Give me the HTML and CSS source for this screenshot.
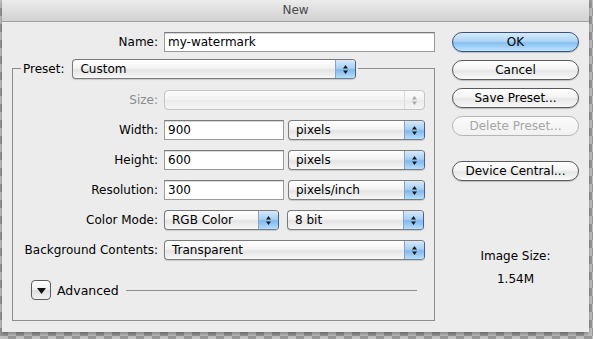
FILE: index.html
```html
<!DOCTYPE html>
<html>
<head>
<title>New</title>
<link rel="stylesheet" href="styles.css">
</head>
<body>

<div class="dialog">
  <div class="titlebar">New</div>

  <div class="sheet">
    <div class="form">

      <div class="namerow">
        <span class="lbl">Name:</span>
        <div class="field">my-watermark</div>
      </div>

      <div class="group">
        <div class="legend">
          <span>Preset:</span>
          <div class="popup preset"><span class="val">Custom</span><span class="arrows"><svg width="5" height="9" viewBox="0 0 5 9"><path d="M2.5 0L5 3.5H0Z M0 5.5H5L2.5 9Z"/></svg></span></div>
        </div>

        <div class="rows">
          <span class="lbl off">Size:</span>
          <div class="popup disabled"><span class="val"></span><span class="arrows"><svg width="5" height="9" viewBox="0 0 5 9"><path d="M2.5 0L5 3.5H0Z M0 5.5H5L2.5 9Z"/></svg></span></div>

          <span class="lbl">Width:</span>
          <div class="pair">
            <div class="field num">900</div>
            <div class="popup unit"><span class="val">pixels</span><span class="arrows"><svg width="5" height="9" viewBox="0 0 5 9"><path d="M2.5 0L5 3.5H0Z M0 5.5H5L2.5 9Z"/></svg></span></div>
          </div>

          <span class="lbl">Height:</span>
          <div class="pair">
            <div class="field num">600</div>
            <div class="popup unit"><span class="val">pixels</span><span class="arrows"><svg width="5" height="9" viewBox="0 0 5 9"><path d="M2.5 0L5 3.5H0Z M0 5.5H5L2.5 9Z"/></svg></span></div>
          </div>

          <span class="lbl">Resolution:</span>
          <div class="pair">
            <div class="field num">300</div>
            <div class="popup unit"><span class="val">pixels/inch</span><span class="arrows"><svg width="5" height="9" viewBox="0 0 5 9"><path d="M2.5 0L5 3.5H0Z M0 5.5H5L2.5 9Z"/></svg></span></div>
          </div>

          <span class="lbl">Color Mode:</span>
          <div class="pair">
            <div class="popup mode"><span class="val">RGB Color</span><span class="arrows"><svg width="5" height="9" viewBox="0 0 5 9"><path d="M2.5 0L5 3.5H0Z M0 5.5H5L2.5 9Z"/></svg></span></div>
            <div class="popup unit"><span class="val">8 bit</span><span class="arrows"><svg width="5" height="9" viewBox="0 0 5 9"><path d="M2.5 0L5 3.5H0Z M0 5.5H5L2.5 9Z"/></svg></span></div>
          </div>

          <span class="lbl">Background Contents:</span>
          <div class="popup"><span class="val">Transparent</span><span class="arrows"><svg width="5" height="9" viewBox="0 0 5 9"><path d="M2.5 0L5 3.5H0Z M0 5.5H5L2.5 9Z"/></svg></span></div>
        </div>

        <div class="advanced">
          <span class="disclose"><svg width="9" height="6" viewBox="0 0 9 6"><path d="M0 0H9L4.5 6Z"/></svg></span>
          <span>Advanced</span>
          <span class="rule"></span>
        </div>
      </div>

    </div>

    <div class="side">
      <div class="btn default">OK</div>
      <div class="btn">Cancel</div>
      <div class="btn">Save Preset...</div>
      <div class="btn disabled">Delete Preset...</div>
      <div class="btn central">Device Central...</div>

      <div class="imgsize">
        <div>Image Size:</div>
        <div class="amount">1.54M</div>
      </div>
    </div>
  </div>
</div>

</body>
</html>
```

FILE: styles.css
```css
body {
    margin: 0;
    height: 339px;
    overflow: hidden;
    font-family: "DejaVu Sans", sans-serif;
    font-size: 12px;
    color: #000;
    background: conic-gradient(#9a9a9a 25%, #c2c2c2 0 50%, #9a9a9a 0 75%, #c2c2c2 0) 0 0 / 16px 16px;
}

.dialog {
    margin-left: 2px;
    width: 587px;
    height: 332px;
    background: #ececec;
    box-shadow: 0 2px 4px rgba(0, 0, 0, 0.35);
}

.titlebar {
    height: 21px;
    line-height: 21px;
    text-align: center;
    font-size: 12px;
    color: #4a4a4a;
    border-bottom: 1px solid #a2a2a2;
    background: linear-gradient(#ebebeb, #d2d2d2);
}

.sheet {
    display: flex;
    padding: 10px 0 0 10px;
}

.form {
    width: 423px;
}

.lbl {
    text-align: right;
    line-height: 20px;
    white-space: nowrap;
}

.lbl.off {
    color: #8c8c8c;
}

.namerow {
    display: grid;
    grid-template-columns: 146px 271px;
    column-gap: 6px;
}

.field {
    box-sizing: border-box;
    height: 20px;
    line-height: 18px;
    padding-left: 3px;
    background: #fff;
    border: 1px solid #9a9a9a;
    border-top-color: #7c7c7c;
    box-shadow: inset 0 1px 0 #d8d8d8;
}

.field.num {
    width: 120px;
}

/* group box */

.group {
    box-sizing: border-box;
    width: 423px;
    margin-top: 16px;
    padding-bottom: 20px;
    border: 1px solid #8e8e8e;
}

.legend {
    display: flex;
    align-items: center;
    gap: 8px;
    width: fit-content;
    height: 20px;
    margin: -10px 0 0 8px;
    padding: 0 2px;
    background: #ececec;
}

.rows {
    display: grid;
    grid-template-columns: 145px 261px;
    column-gap: 6px;
    row-gap: 10px;
    margin-top: 11px;
}

.pair {
    display: flex;
    gap: 4px;
}

/* popup menus */

.popup {
    box-sizing: border-box;
    display: flex;
    align-items: center;
    height: 20px;
    padding-left: 7px;
    border: 1px solid #7b7b7b;
    border-right-color: #4c5f82;
    border-radius: 4px;
    background: linear-gradient(#ffffff, #f3f3f3 45%, #e4e4e4 55%, #f7f7f7);
    box-shadow: 0 1px 1px rgba(0, 0, 0, 0.15);
    overflow: hidden;
}

.popup .val {
    flex: 1;
    white-space: nowrap;
}

.popup .arrows {
    display: flex;
    align-items: center;
    justify-content: center;
    width: 19px;
    align-self: stretch;
    border-left: 1px solid #8aa2c4;
    background: linear-gradient(#d6e9fb, #a8d0f5 45%, #7fb8ee 55%, #b9def9);
}

.popup .arrows svg {
    fill: #1a1a1a;
}

.preset {
    width: 284px;
}

.unit {
    width: 137px;
}

.mode {
    width: 115px;
    margin-right: 4px;
}

.popup.disabled {
    border-color: #c4c4c4;
    background: linear-gradient(#fbfbfb, #f2f2f2 50%, #ebebeb 51%, #f4f4f4);
    box-shadow: none;
}

.popup.disabled .arrows {
    border-left-color: #dcdcdc;
    background: none;
}

.popup.disabled .arrows svg {
    fill: #a9a9a9;
}

/* advanced */

.advanced {
    display: flex;
    align-items: center;
    gap: 6px;
    margin: 20px 17px 0 18px;
    font-size: 12.5px;
}

.disclose {
    box-sizing: border-box;
    display: flex;
    align-items: center;
    justify-content: center;
    width: 20px;
    height: 20px;
    border: 1px solid #5c5c5c;
    border-radius: 4px;
    background: linear-gradient(#ffffff, #eeeeee 50%, #dedede 51%, #f2f2f2);
}

.disclose svg {
    fill: #111;
    margin-top: 1px;
}

.rule {
    flex: 1;
    height: 1px;
    margin-left: 1px;
    background: #8e8e8e;
}

/* buttons */

.side {
    display: flex;
    flex-direction: column;
    gap: 8px;
    width: 127px;
    margin-left: 17px;
}

.btn {
    box-sizing: border-box;
    height: 20px;
    line-height: 18px;
    text-align: center;
    border: 1px solid #5a5a5a;
    border-radius: 10px;
    background: linear-gradient(#ffffff, #f4f4f4 45%, #e6e6e6 55%, #fafafa);
    box-shadow: 0 1px 1px rgba(0, 0, 0, 0.2);
}

.btn.default {
    border-color: #3d5478;
    background: linear-gradient(#d7ebfc, #aed5f6 45%, #86c0f0 55%, #bfe3fb);
}

.btn.disabled {
    color: #a6a6a6;
    border-color: #b6b6b6;
    background: linear-gradient(#fbfbfb, #f1f1f1);
    box-shadow: none;
}

.btn.central {
    margin-top: 17px;
}

.imgsize {
    margin-top: 59px;
    text-align: center;
    line-height: 16px;
}

.imgsize .amount {
    margin-top: 7px;
}
```
